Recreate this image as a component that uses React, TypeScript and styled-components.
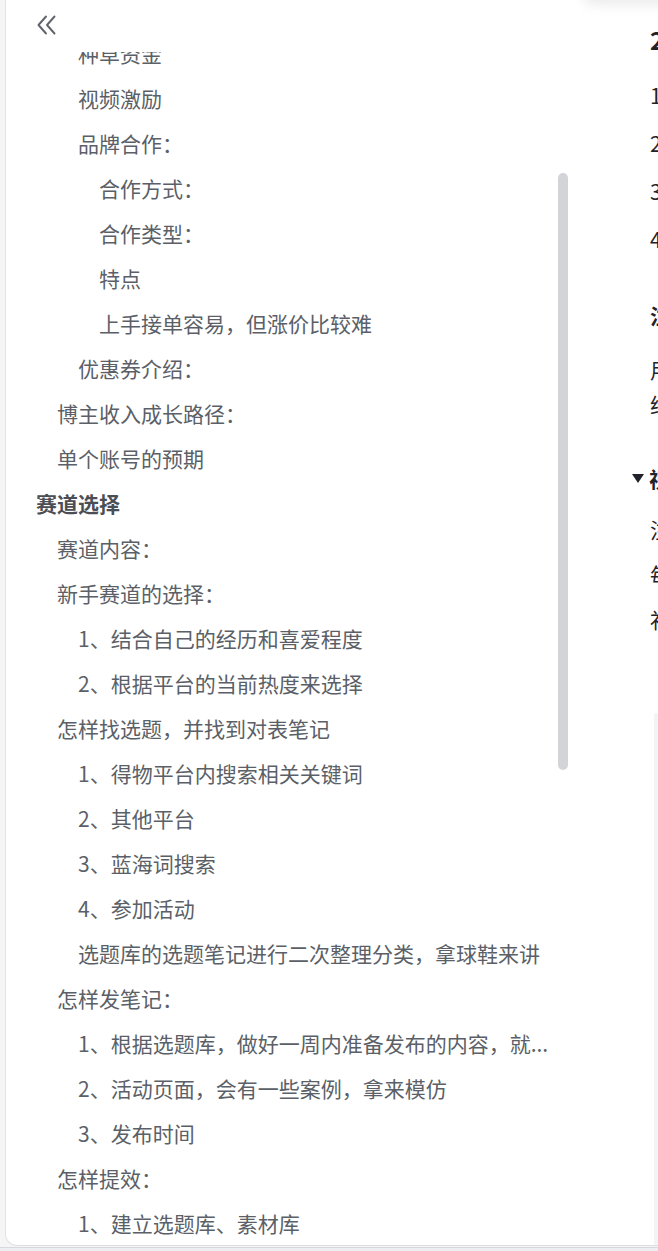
import React from "react";
import styled, { createGlobalStyle } from "styled-components";

const GlobalStyle = createGlobalStyle`
  html, body {
    margin: 0;
    padding: 0;
    background: #eceef1;
    overflow: hidden;
  }
  body {
    font-family: "Noto Sans CJK SC", "Noto Sans", "Liberation Sans", sans-serif;
  }
`;

const Frame = styled.div`
  width: 658px;
  height: 1247px;
  background: #f5f5f6;
  display: flex;
  position: relative;
  overflow: hidden;
  border-bottom: 1px solid #d6d8dc;
`;

const Card = styled.div`
  margin-left: 5px;
  flex: 1;
  height: 1245px;
  background: #ffffff;
  border-left: 1px solid #e3e3e5;
  border-bottom: 1px solid #dcdde0;
  border-bottom-left-radius: 12px;
  display: flex;
  position: relative;
  overflow: hidden;
`;

const Sidebar = styled.aside`
  width: 626px;
  flex-shrink: 0;
  display: flex;
  flex-direction: column;
  position: relative;
`;

const Header = styled.div`
  height: 52px;
  display: flex;
  align-items: flex-start;
  padding-left: 29px;
  flex-shrink: 0;
`;

const CollapseButton = styled.button`
  width: 24px;
  height: 24px;
  padding: 0;
  margin-top: 13px;
  border: none;
  background: transparent;
  display: flex;
  align-items: center;
  justify-content: center;
  cursor: pointer;
`;

const ScrollArea = styled.div`
  flex: 1;
  overflow: hidden;
`;

const List = styled.ul`
  list-style: none;
  margin: -21px 0 0 0;
  padding: 0;
  width: 560px;
`;

const Item = styled.li<{ $level: number; $bold?: boolean }>`
  height: 45px;
  line-height: 45px;
  font-size: 21px;
  padding-left: ${({ $level }) => 30 + $level * 21}px;
  color: ${({ $bold }) => ($bold ? "#4b4e54" : "#5b5f67")};
  font-weight: ${({ $bold }) => ($bold ? 700 : 400)};
  white-space: nowrap;
  overflow: hidden;
  text-overflow: ellipsis;
  cursor: pointer;
`;

const ScrollThumb = styled.div`
  position: absolute;
  left: 552px;
  top: 173px;
  width: 10px;
  height: 597px;
  border-radius: 5px;
  background: #d3d4d8;
`;

const Doc = styled.main`
  flex: 1;
  padding-left: 18px;
  display: flex;
  flex-direction: column;
  color: #1f2329;
  font-size: 21px;
  white-space: nowrap;
  overflow: hidden;
`;

const DocTitle = styled.div`
  margin-top: 16px;
  line-height: 48px;
  font-size: 24px;
  font-weight: 700;
`;

const DocList = styled.div`
  margin-top: 7px;
`;

const DocListItem = styled.div`
  line-height: 48px;
`;

const DocHeading = styled.div<{ $gap: number }>`
  margin-top: ${({ $gap }) => $gap}px;
  line-height: 48px;
  font-weight: 700;
  display: flex;
  align-items: center;
`;

const Caret = styled.span`
  width: 0;
  height: 0;
  margin-left: -18px;
  margin-right: 5px;
  border-left: 6.5px solid transparent;
  border-right: 6.5px solid transparent;
  border-top: 9px solid #1f2329;
`;

const DocPara = styled.div<{ $gap: number; $lh: number }>`
  margin-top: ${({ $gap }) => $gap}px;
  line-height: ${({ $lh }) => $lh}px;
`;

const CodeBlock = styled.div`
  margin-top: 71px;
  margin-left: 4px;
  flex: 1;
  background: #f3f3f5;
  border-radius: 4px;
`;

const FloatingBar = styled.div`
  position: absolute;
  top: -40px;
  left: 578px;
  width: 200px;
  height: 40px;
  background: #ffffff;
  border-radius: 8px;
  box-shadow: 0 4px 14px rgba(0, 0, 0, 0.09);
`;

const outline: { text: string; level: number; bold?: boolean }[] = [
  { text: "种草资金", level: 2 },
  { text: "视频激励", level: 2 },
  { text: "品牌合作：", level: 2 },
  { text: "合作方式：", level: 3 },
  { text: "合作类型：", level: 3 },
  { text: "特点", level: 3 },
  { text: "上手接单容易，但涨价比较难", level: 3 },
  { text: "优惠券介绍：", level: 2 },
  { text: "博主收入成长路径：", level: 1 },
  { text: "单个账号的预期", level: 1 },
  { text: "赛道选择", level: 0, bold: true },
  { text: "赛道内容：", level: 1 },
  { text: "新手赛道的选择：", level: 1 },
  { text: "1、结合自己的经历和喜爱程度", level: 2 },
  { text: "2、根据平台的当前热度来选择", level: 2 },
  { text: "怎样找选题，并找到对表笔记", level: 1 },
  { text: "1、得物平台内搜索相关关键词", level: 2 },
  { text: "2、其他平台", level: 2 },
  { text: "3、蓝海词搜索", level: 2 },
  { text: "4、参加活动", level: 2 },
  { text: "选题库的选题笔记进行二次整理分类，拿球鞋来讲", level: 2 },
  { text: "怎样发笔记：", level: 1 },
  { text: "1、根据选题库，做好一周内准备发布的内容，就...", level: 2 },
  { text: "2、活动页面，会有一些案例，拿来模仿", level: 2 },
  { text: "3、发布时间", level: 2 },
  { text: "怎样提效：", level: 1 },
  { text: "1、建立选题库、素材库", level: 2 },
];

const CollapseIcon = () => (
  <svg width="24" height="24" viewBox="0 0 24 24" fill="none">
    <path
      d="M11 3.5 3.5 12 11 20.5M19.5 3.5 12 12l7.5 8.5"
      stroke="#5f636b"
      strokeWidth="1.9"
      strokeLinecap="round"
      strokeLinejoin="round"
    />
  </svg>
);

export default function App() {
  return (
    <>
      <GlobalStyle />
      <Frame>
        <Card>
          <Sidebar>
            <Header>
              <CollapseButton aria-label="收起目录">
                <CollapseIcon />
              </CollapseButton>
            </Header>
            <ScrollArea>
              <List>
                {outline.map((o, i) => (
                  <Item key={i} $level={o.level} $bold={o.bold}>
                    {o.text}
                  </Item>
                ))}
              </List>
            </ScrollArea>
            <ScrollThumb />
          </Sidebar>
          <Doc>
            <DocTitle>2、账号定位</DocTitle>
            <DocList>
              <DocListItem>1、确定方向</DocListItem>
              <DocListItem>2、确定人设</DocListItem>
              <DocListItem>3、确定风格</DocListItem>
              <DocListItem>4、确定内容</DocListItem>
            </DocList>
            <DocHeading $gap={28}>注意事项</DocHeading>
            <DocPara $gap={13} $lh={35}>用户画像</DocPara>
            <DocPara $gap={0} $lh={35}>给出方向</DocPara>
            <DocHeading $gap={32}>
              <Caret />
              视频笔记
            </DocHeading>
            <DocPara $gap={5} $lh={45}>注意画面</DocPara>
            <DocPara $gap={0} $lh={45}>每周更新</DocPara>
            <DocPara $gap={0} $lh={45}>补充素材</DocPara>
            <CodeBlock />
          </Doc>
          <FloatingBar />
        </Card>
      </Frame>
    </>
  );
}
